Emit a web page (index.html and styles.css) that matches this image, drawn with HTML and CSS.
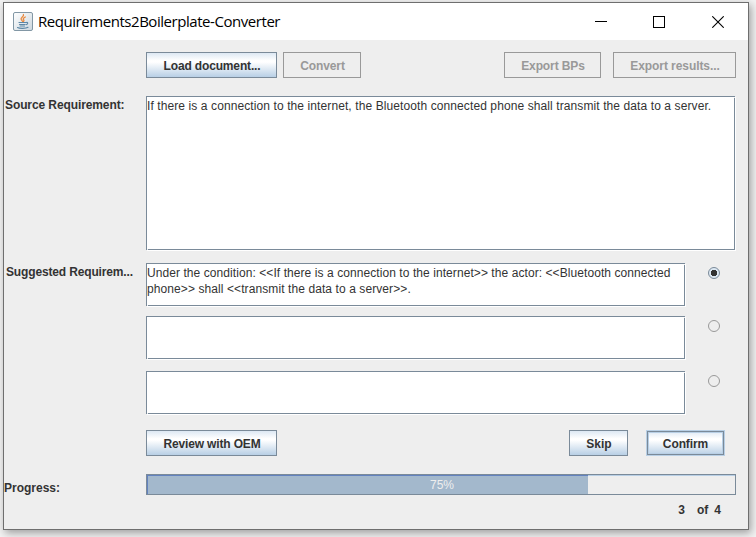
FILE: index.html
```html
<!DOCTYPE html>
<html lang="en">
<head>
<meta charset="utf-8">
<title>Requirements2Boilerplate-Converter</title>
<link rel="stylesheet" href="styles.css">
</head>
<body>
<div class="window">
  <header class="titlebar">
    <svg class="app-icon" width="20" height="20" viewBox="0 0 20 20">
      <defs><linearGradient id="tile" x1="0" y1="0" x2="1" y2="1"><stop offset="0" stop-color="#fff"/><stop offset="1" stop-color="#ccd7df"/></linearGradient></defs>
      <rect x=".5" y=".5" width="19" height="18" rx="1.5" fill="url(#tile)" stroke="#8297a5"/>
      <g fill="none" stroke-linecap="round">
        <path d="M10.4 2.5c1.2 2-3.4 3-2.2 5 .4.8 1.2 1.200 1.200 1.800M12.300 5c-2 1-2.600 1.900-1.600 3 .5.7.2 1.200-.4 1.600" stroke="#e8893f" stroke-width="1.300"/>
        <path d="M6 10.500h7M6.500 12.500h5.500M7 14h4.500M13.300 10.500c1.900-.5 1.900 1.600-.2 2.200M4.500 15.500c2 1.200 8.500 1.100 10.500-.2" stroke="#5d87a6" stroke-width="1.100"/>
      </g>
    </svg>
    <h1 class="title">Requirements2Boilerplate-Converter</h1>
    <div class="controls">
      <svg width="12" height="12" shape-rendering="crispEdges"><path d="M0 5.500h12" stroke="#000"/></svg>
      <svg width="12" height="12" shape-rendering="crispEdges"><rect x=".5" y=".5" width="11" height="11" fill="none" stroke="#000"/></svg>
      <svg class="close" width="12" height="12"><path d="M.3.3l11.400 11.400M11.700.3L.3 11.700" stroke="#000" stroke-width="1.100"/></svg>
    </div>
  </header>
  <main class="form">
    <div class="toolbar">
      <button class="btn load">Load document...</button>
      <button class="btn convert" disabled>Convert</button>
      <button class="btn export-bps" disabled>Export BPs</button>
      <button class="btn export-results" disabled>Export results...</button>
    </div>
    <div class="row source">
      <div class="label"><span class="t-source">Source Requirement:</span></div>
      <div class="area"><span class="t-line0">If there is a connection to the internet, the Bluetooth connected phone shall transmit the data to a server.</span></div>
    </div>
    <div class="row suggested">
      <div class="label"><span class="t-suggested">Suggested Requirem...</span></div>
      <div class="suggestions">
        <div class="option"><div class="area"><span class="t-line1">Under the condition: &lt;&lt;If there is a connection to the internet&gt;&gt; the actor: &lt;&lt;Bluetooth connected</span><br><span class="t-line2">phone&gt;&gt; shall &lt;&lt;transmit the data to a server&gt;&gt;.</span></div><i class="radio checked"></i></div>
        <div class="option"><div class="area"></div><i class="radio"></i></div>
        <div class="option"><div class="area"></div><i class="radio"></i></div>
      </div>
    </div>
    <div class="actions">
      <button class="btn review">Review with OEM</button>
      <button class="btn skip">Skip</button>
      <button class="btn confirm">Confirm</button>
    </div>
    <div class="row progress-row">
      <div class="label"><span>Progress:</span></div>
      <div class="progress"><div class="fill" style="width:75%"></div><span class="percent">75%</span></div>
    </div>
    <footer class="counter"><span>3</span><span>of</span><span>4</span></footer>
  </main>
</div>
</body>
</html>
```
FILE: styles.css
```css
* { box-sizing: border-box; }
body {
  margin: 0;
  height: 537px;
  padding: 2px 0 0 3px;
  overflow: hidden;
  background: #f2f2f2;
  font: 12px/16px "Liberation Sans", Arial, sans-serif;
  color: #333;
}
.window {
  width: 746px;
  height: 528px;
  border: 1px solid #6e6e6e;
  background: #eee;
  box-shadow: 2px 3px 8px rgba(0, 0, 0, .35);
}
.titlebar {
  display: flex;
  align-items: center;
  height: 37px;
  padding: 0 24px 0 9px;
  background: #fff;
}
.app-icon { margin-top: 1px; }
.title {
  margin: 0 0 2px 5px;
  font: 15px/20px "Open Sans", "Segoe UI", sans-serif;
  letter-spacing: -.45px;
  color: #000;
  white-space: nowrap;
}
.controls { display: flex; gap: 46px; margin-left: auto; }
.close { margin-left: 1px; }
.form { padding-top: 12px; }
.toolbar, .actions { display: flex; height: 26px; padding-left: 142px; }
.btn {
  height: 26px;
  padding: 1px 0 0 1px;
  border: 1px solid #7a8a99;
  border-radius: 0;
  background: linear-gradient(#dde8f3 0, #fff 32%, #fff 38%, #b8cfe5 100%);
  font: bold 12px/16px "Liberation Sans", Arial, sans-serif;
  color: #333;
  white-space: nowrap;
}
.btn:disabled { border-color: #999; background: #eee; color: #999; }
.load, .review { width: 131px; letter-spacing: -.15px; }
.convert { width: 78px; margin-left: 6px; letter-spacing: -.1px; }
.export-bps { width: 97px; margin-left: 143px; letter-spacing: -.1px; }
.export-results { width: 123px; margin-left: 12px; letter-spacing: -.08px; }
.row { display: flex; }
.label { width: 142px; flex: none; font-weight: bold; white-space: nowrap; }
.area {
  position: relative;
  border: 1px solid #7a8a99;
  background: #fff;
  box-shadow: 1px 1px 0 #fff;
  white-space: nowrap;
}
.area::before, .area::after {
  content: "";
  position: absolute;
  width: 1px;
  height: 1px;
  background: #eee;
}
.area::before { top: 0; right: -1px; }
.area::after { bottom: -1px; left: 0; }
.source { margin-top: 18px; }
.source .label { padding: 1px 0 0 1px; }
.source .area { width: 589px; height: 154px; padding-top: 1px; }
.suggested { margin-top: 13px; }
.suggested .label { padding: 1px 0 0 2px; }
.t-source { letter-spacing: -.1px; }
.t-suggested { letter-spacing: -.15px; }
.t-line0 { letter-spacing: .098px; }
.t-line1 { letter-spacing: .073px; }
.t-line2 { letter-spacing: .09px; }
.suggestions { display: grid; grid-template-rows: 43px 43px 43px; row-gap: 10px; }
.option { display: flex; }
.option .area { width: 539px; height: 43px; padding-top: 1px; }
.option:nth-child(3) { margin-top: 2px; }
.radio {
  width: 12px;
  height: 12px;
  margin: 4px 0 0 23px;
  border: 1px solid #999;
  border-radius: 50%;
}
.radio.checked {
  border-color: #7a8a99;
  background: radial-gradient(circle, #333 0 3px, #dce8f3 3.500px);
}
.actions { margin-top: 18px; }
.skip { width: 59px; margin-left: 292px; }
.confirm {
  width: 79px;
  margin-left: 18px;
  padding: 1px 0 0;
  border-color: #b8cfe5;
  box-shadow: inset 0 0 0 1px #7a8a99, inset 0 0 0 2px #b8cfe5;
  letter-spacing: -.1px;
}
.progress-row { margin-top: 18px; }
.progress-row .label { padding-top: 6px; }
.progress {
  position: relative;
  width: 590px;
  height: 21px;
  border: 1px solid #7a8a99;
  box-shadow: inset 0 1px #b8cfe5;
}
.fill { height: 19px; background: #a3b8cc; box-shadow: inset 1px 1px #6382bf; }
.percent { position: absolute; left: 0; right: 0; top: 2px; padding-left: 2px; text-align: center; color: #eee; }
.counter { display: flex; margin: 6px 27px 0 0; justify-content: flex-end; font-weight: bold; }
.counter span:nth-child(2) { margin: 0 6px 0 12px; }
```
